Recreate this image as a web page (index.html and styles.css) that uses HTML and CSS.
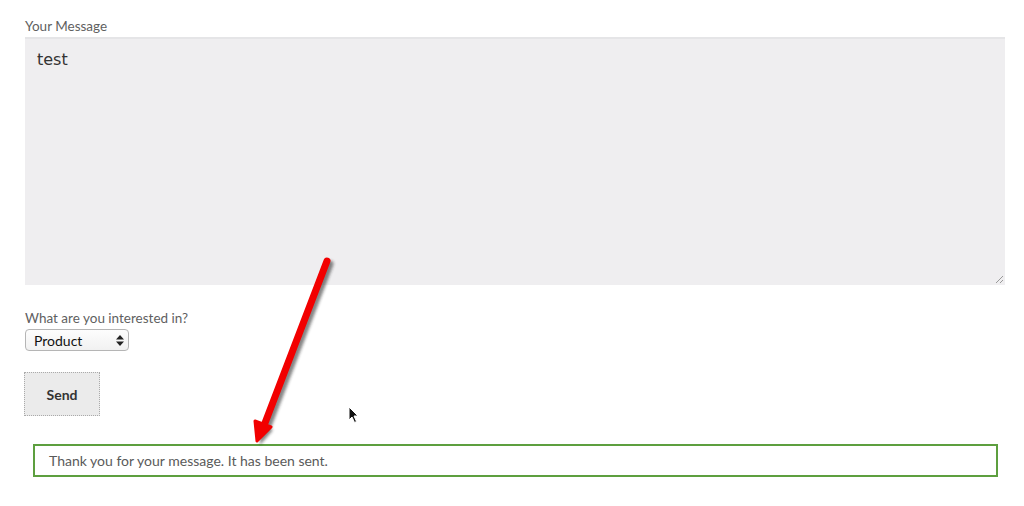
FILE: index.html
```html
<!DOCTYPE html>
<html>
<head>
<meta charset="utf-8">
<link rel="stylesheet" href="styles.css">
</head>
<body>
<form class="form">
  <label class="label">Your Message</label>
  <div class="textarea">test<span class="grip"></span></div>

  <label class="label label-select">What are you interested in?</label>
  <div class="select">
    <span>Product</span>
    <svg class="sel-arrows" width="8" height="11" viewBox="0 0 8 11"><path d="M4 0L8 4.5H0Z M0 6.5H8L4 11Z" fill="#222"/></svg>
  </div>

  <div class="button">Send</div>

  <div class="notice">Thank you for your message. It has been sent.</div>
</form>

<svg class="arrow" width="1024" height="506" viewBox="0 0 1024 506">
  <defs>
    <filter id="sh" x="-50%" y="-50%" width="200%" height="200%">
      <feGaussianBlur stdDeviation="1.5"/>
    </filter>
  </defs>
  <g transform="translate(3,3)" filter="url(#sh)" opacity="0.55">
    <line x1="327" y1="261" x2="265" y2="423" stroke="#222" stroke-width="7" stroke-linecap="round"/>
    <path d="M257 442 L256 421 L270 427 Z" fill="#222"/>
  </g>
  <line x1="327" y1="261" x2="265" y2="423" stroke="#f20000" stroke-width="7" stroke-linecap="round"/>
  <path d="M257 441 L255 421 L271 427 Z" fill="#f20000" stroke="#f20000" stroke-width="3" stroke-linejoin="round"/>
</svg>

<svg class="cursor" width="12" height="18" viewBox="0 0 12 18">
  <path d="M1 1 L1 14 L4 11 L6.5 16.5 L8.5 15.5 L6 10 L10 10 Z" fill="#111" stroke="#fff" stroke-width="1"/>
</svg>
</body>
</html>
```

FILE: styles.css
```css
html, body {
  margin: 0;
  padding: 0;
  background: #fff;
}
body {
  position: relative;
  width: 1024px;
  height: 506px;
  overflow: hidden;
  font-family: "Source Sans Pro", Lato, "Noto Sans", sans-serif;
}
.form {
  display: flex;
  flex-direction: column;
  align-items: flex-start;
  padding: 18px 19px 0 25px;
}
.label {
  display: block;
  font-size: 13.5px;
  line-height: 16px;
  color: #5f5f5f;
  margin-bottom: 3px;
}
.textarea {
  position: relative;
  box-sizing: border-box;
  width: 980px;
  height: 248px;
  background: #efeef0;
  border-top: 2px solid #e5e5e7;
  padding: 10px 12px;
  font-family: "DejaVu Sans", sans-serif;
  font-size: 16px;
  color: #333;
  line-height: 22px;
}
.grip {
  position: absolute;
  right: 2px;
  bottom: 2px;
  width: 7px;
  height: 7px;
  background: linear-gradient(135deg, transparent 45%, #999 46%, #999 54%, transparent 55%, transparent 75%, #999 76%, #999 84%, transparent 85%);
}
.label-select {
  margin-top: 25px;
  margin-bottom: 3px;
}
.select {
  box-sizing: border-box;
  width: 104px;
  height: 22px;
  border: 1px solid #b5b5b5;
  border-radius: 4px;
  background: linear-gradient(#fdfdfd, #f1f1f1);
  display: flex;
  align-items: center;
  justify-content: space-between;
  padding: 0 4px 0 8px;
  font-size: 14px;
  color: #111;
}
.button {
  box-sizing: border-box;
  margin-top: 21px;
  margin-left: -1px;
  width: 76px;
  height: 44px;
  background: #ebebeb;
  border: 1px dotted #aaa;
  display: flex;
  align-items: center;
  justify-content: center;
  font-weight: bold;
  font-size: 14px;
  color: #333;
}
.notice {
  box-sizing: border-box;
  margin-top: 28px;
  margin-left: 8px;
  width: 965px;
  height: 33px;
  border: 2px solid #5d9f3f;
  padding: 0 14px;
  display: flex;
  align-items: center;
  font-size: 14px;
  color: #5a5a5a;
}
.arrow {
  position: absolute;
  left: 0;
  top: 0;
  pointer-events: none;
}
.cursor {
  position: absolute;
  left: 348px;
  top: 406px;
}
```
